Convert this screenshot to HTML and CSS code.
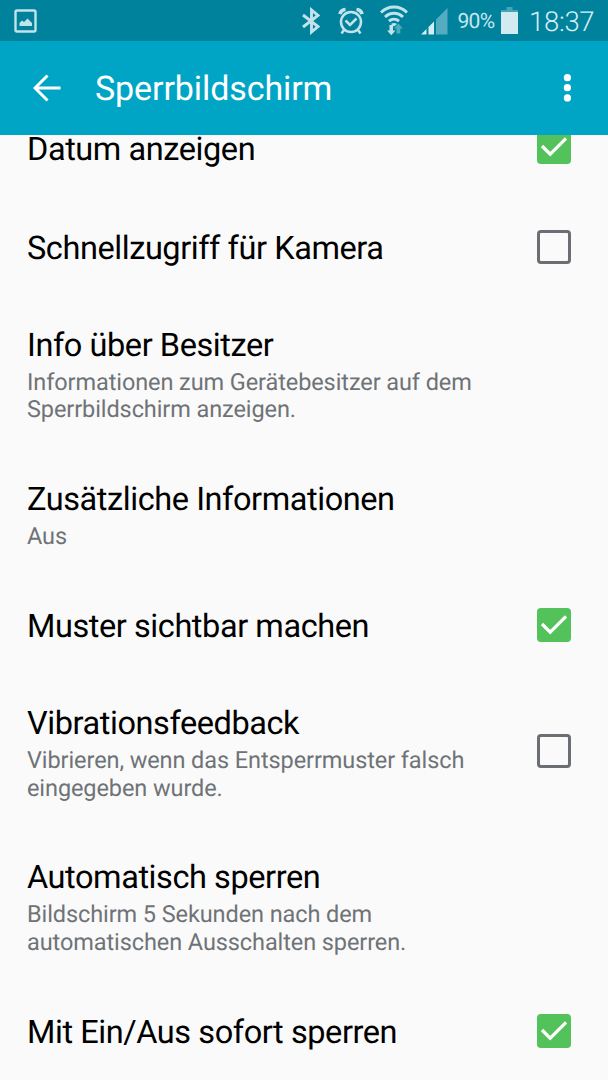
FILE: index.html
```html
<!DOCTYPE html>
<html lang="de">
<head>
<meta charset="utf-8">
<title>Sperrbildschirm</title>
<link rel="stylesheet" href="styles.css">
</head>
<body>
<div class="screen">
  <div class="statusbar">
    <svg class="status-icon picture" width="23" height="24" viewBox="0 0 23 24"><rect x="1.500" y="1.500" width="20" height="21" rx="1.500" fill="none" stroke="#c2e3ea" stroke-width="2.400"/><path d="M5.500 17v-3l2.500-2.500 2 1.500 3.500-3.500 4.500 4.500v3z" fill="#c2e3ea"/></svg>
    <svg class="status-icon bluetooth" width="20" height="28" viewBox="0 0 20 28"><path d="M2 8l15 11.500-6.500 5.500V3l6.500 5.500L2 20" fill="none" stroke="#c2e3ea" stroke-width="2.900"/></svg>
    <svg class="status-icon alarm" width="26" height="28" viewBox="0 0 26 28"><g fill="none" stroke="#c2e3ea" stroke-width="2.500"><circle cx="13" cy="15" r="10"/><path d="M7.500 13.500l4.500 4.500 6.500-6.500"/><path d="M6 23l-2.500 3.500M20 23l2.500 3.500"/><path d="M2 7.200C2.500 4.500 4.500 2.700 7.500 2.500M24 7.200c-.5-2.700-2.500-4.500-5.500-4.700" stroke-width="3.600"/></g></svg>
    <svg class="status-icon wifi" width="28" height="31" viewBox="0 0 28 31"><g fill="none" stroke="#c2e3ea" stroke-width="3"><path d="M1 7.500c7.500-7.200 18.500-7.200 26 0M5 12c5.300-5 12.700-5 18 0M9 16.200c3-2.700 7-2.700 10 0"/></g><path d="M14 21.500l-3-2.500q3-2 6 0z" fill="#c2e3ea"/><path d="M9.500 20h3.500v5.500h2.500l-4.200 4.800-4.200-4.800h2.400z" fill="#c2e3ea"/><path d="M16.500 28.500h3.800v-5h2.700L18.400 18.500 14 23.500h2.500z" fill="#4eaabd"/></svg>
    <svg class="status-icon signal" width="27" height="28" viewBox="0 0 27 28"><path d="M0 26.500l5.500-5.500v5.500zM7.500 19L13 13.500v13H7.500z" fill="#d5ecf1"/><path d="M15 11.500L26.500 0v26.500H15z" fill="#53acbf"/></svg>
    <span class="battery-text">90%</span>
    <svg class="status-icon battery" width="17" height="28" viewBox="0 0 17 28"><path d="M5.500 0h6v3H17v2H0V3h5.500z" fill="#45a4b8"/><path d="M0 5h17v22H0z" fill="#d2ebf0"/></svg>
    <span class="clock">18:37</span>
  </div>
  <header class="appbar">
    <svg class="back" width="28" height="28" viewBox="0 0 28 28"><path d="M14.500 1.500L2 14l12.500 12.500M2 14h25.500" fill="none" stroke="#fff" stroke-width="3"/></svg>
    <h1 class="heading">Sperrbildschirm</h1>
    <svg class="more" width="8" height="28" viewBox="0 0 8 28"><g fill="#fff"><circle cx="4.400" cy="3.700" r="3.600"/><circle cx="4.400" cy="13.700" r="3.600"/><circle cx="4.400" cy="23.900" r="3.600"/></g></svg>
  </header>
  <main class="list-viewport">
    <div class="list">
      <div class="row scrolled">
        <div class="title">Datum anzeigen</div>
        <span class="check checked"><svg width="34" height="34" viewBox="0 0 34 34"><path d="M5 16l8.200 8.200L29 8.400" fill="none" stroke="#fff" stroke-width="3.200"/></svg></span>
      </div>
      <div class="row">
        <div class="title lowered">Schnellzugriff für Kamera</div>
        <span class="check"></span>
      </div>
      <div class="row detailed">
        <div class="text"><div class="title">Info über Besitzer</div><div class="summary">Informationen zum Gerätebesitzer auf dem<br>Sperrbildschirm anzeigen.</div></div>
      </div>
      <div class="row detailed">
        <div class="text"><div class="title">Zusätzliche Informationen</div><div class="summary">Aus</div></div>
      </div>
      <div class="row">
        <div class="title lowered">Muster sichtbar machen</div>
        <span class="check checked"><svg width="34" height="34" viewBox="0 0 34 34"><path d="M5 16l8.200 8.200L29 8.400" fill="none" stroke="#fff" stroke-width="3.200"/></svg></span>
      </div>
      <div class="row detailed">
        <div class="text"><div class="title">Vibrationsfeedback</div><div class="summary">Vibrieren, wenn das Entsperrmuster falsch<br>eingegeben wurde.</div></div>
        <span class="check"></span>
      </div>
      <div class="row detailed">
        <div class="text"><div class="title">Automatisch sperren</div><div class="summary">Bildschirm 5 Sekunden nach dem<br>automatischen Ausschalten sperren.</div></div>
      </div>
      <div class="row">
        <div class="title lowered">Mit Ein/Aus sofort sperren</div>
        <span class="check checked"><svg width="34" height="34" viewBox="0 0 34 34"><path d="M5 16l8.200 8.200L29 8.400" fill="none" stroke="#fff" stroke-width="3.200"/></svg></span>
      </div>
    </div>
  </main>
</div>
</body>
</html>
```
FILE: styles.css
```css
* { box-sizing: border-box; }
body { margin: 0; font-family: Roboto, "Noto Sans", sans-serif; background: #fafafa; text-rendering: geometricPrecision; }
.screen { display: flex; flex-direction: column; width: 608px; height: 1080px; overflow: hidden; background: #fafafa; }
.statusbar { display: flex; flex: none; height: 41px; padding: 0 13px 0 14px; background: #00829c; color: #c7e6ec; }
.status-icon { flex: none; }
.picture { margin-top: 9px; }
.bluetooth { margin: 7px 0 0 264px; }
.alarm { margin: 7px 0 0 17px; }
.wifi { margin: 5px 0 0 16px; }
.signal { margin: 8px 0 0 13px; }
.battery-text { width: 43px; padding-left: 9.5px; font-size: 21px; line-height: 44px; letter-spacing: -0.7px; white-space: nowrap; }
.battery { margin: 7px 0 0 10px; }
.clock { margin-left: 11px; font-size: 27.5px; font-weight: 300; line-height: 44px; letter-spacing: -0.3px; color: #d6eef3; white-space: nowrap; }
.appbar { display: flex; flex: none; align-items: center; height: 94px; padding: 0 37px 0 33px; background: #00a5c6; }
.heading { flex: 1; margin: 2px 0 0 34px; font-size: 34px; font-weight: 400; line-height: 40px; letter-spacing: -0.1px; color: #fff; }
.list-viewport { flex: 1; overflow: hidden; }
.row { display: flex; align-items: center; justify-content: space-between; height: 98px; padding: 0 37px 0 27px; }
.detailed { height: auto; padding-top: 29.6px; padding-bottom: 26.2px; }
.title { font-size: 32.5px; font-weight: 400; line-height: 38px; letter-spacing: -0.43px; color: #000; white-space: nowrap; }
.summary { margin-top: 5px; font-size: 23.5px; font-weight: 400; line-height: 27.6px; letter-spacing: -0.09px; color: #6f7377; white-space: nowrap; }
.check { flex: none; width: 34px; height: 34px; border: 3px solid #6b6f73; border-radius: 4px; }
.checked { border: 0; background: #53c25b; }
.checked svg { display: block; }
.lowered { padding-top: 1px; }
.detailed .check { margin-top: -4px; }
.scrolled { align-items: flex-start; height: 63px; }
.scrolled .title { line-height: 28px; }
.scrolled .check { margin-top: -5px; }
```
